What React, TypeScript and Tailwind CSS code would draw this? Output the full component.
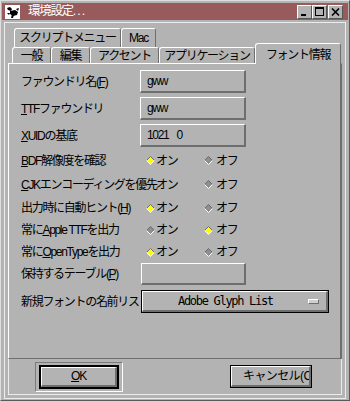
import type { ReactNode } from 'react';

function Diamond({ on }: { on: boolean }) {
  return (
    <svg width="9" height="9" viewBox="0 0 9 9" className="shrink-0">
      <polygon points="4.5,0.5 8.5,4.5 4.5,8.5 0.5,4.5" fill={on ? '#ffff00' : '#8e8e8e'} />
      <polyline points="0.5,4.5 4.5,0.5 8.5,4.5" fill="none" stroke="#6a6a6a" />
      <polyline points="0.5,4.5 4.5,8.5 8.5,4.5" fill="none" stroke="#ffffff" />
    </svg>
  );
}

function OnOff({ on, off }: { on: boolean; off: boolean }) {
  return (
    <div className="flex items-center pl-[6px]">
      <div className="flex w-[58px] items-center gap-[1px]">
        <Diamond on={on} />
        <span>オン</span>
      </div>
      <div className="flex items-center gap-[3px]">
        <Diamond on={off} />
        <span>オフ</span>
      </div>
    </div>
  );
}

function Field({ children }: { children?: ReactNode }) {
  return (
    <div className="flex h-full w-[106px] items-center border-t border-l border-r-2 border-b-2 border-t-white border-l-white border-r-[#6e6e6e] border-b-[#6e6e6e] pl-[6px]">
      {children}
    </div>
  );
}

function Row({ label, h, children, className = '' }: { label: ReactNode; h: string; children?: ReactNode; className?: string }) {
  return (
    <div className={`flex items-center ${h} ${className}`}>
      <div className="relative z-10 w-[119px] shrink-0 whitespace-nowrap">
        <span className="bg-[#b3b3b3]">{label}</span>
      </div>
      {children}
    </div>
  );
}

function Tab({ children, className = '' }: { children: ReactNode; className?: string }) {
  return (
    <div
      className={`flex items-center justify-center rounded-t-[3px] border-t border-l border-r border-t-white border-l-white border-r-[#6e6e6e] bg-[#b3b3b3] ${className}`}
    >
      {children}
    </div>
  );
}

function TitleIcon() {
  return (
    <svg width="15" height="14" viewBox="0 0 15 14" className="shrink-0">
      <rect width="15" height="14" fill="#ffffff" />
      <path d="M2 3 L5 2 L7 4 L6 6 L3 5 Z" fill="#000" />
      <path d="M5 6 L10 5 L13 7 L12 10 L8 11 L5 9 Z" fill="#000" />
      <path d="M7 9 L6 13 L8 13 L9 10 Z" fill="#000" />
      <path d="M11 4 L14 3 L13 6 Z" fill="#000" />
      <path d="M2 8 L5 8 L4 10 Z" fill="#000" />
    </svg>
  );
}

function WinButton({ children, className = '' }: { children: ReactNode; className?: string }) {
  return (
    <div
      className={`relative flex h-[14px] w-[15px] items-center justify-center border-t border-l border-r border-b border-t-white border-l-white border-r-[#555555] border-b-[#555555] bg-[#b3b3b3] ${className}`}
    >
      {children}
    </div>
  );
}

export default function App() {
  return (
    <div className="flex h-[401px] w-[350px] flex-col border border-t-[#dedede] border-l-[#dedede] border-r-[#5a5a5a] border-b-[#5a5a5a] bg-[#b3b3b3] px-[1px] pt-[2px] font-['Liberation_Sans','Noto_Sans_CJK_JP',sans-serif] text-[12px] tracking-[-1.3px] text-black">
      {/* title bar */}
      <div className="flex h-[17px] shrink-0 items-center bg-[#985a5a] pl-[3px] pr-[5px]">
        <TitleIcon />
        <span className="ml-[8px] text-[12.5px] text-white">
          環境設定<span className="tracking-[1px]">...</span>
        </span>
        <div className="ml-auto flex items-center">
          <WinButton>
            <div className="absolute bottom-[2px] left-[3px] h-[2px] w-[5px] bg-black" />
          </WinButton>
          <WinButton>
            <div className="h-[9px] w-[9px] border border-t-2 border-black" />
          </WinButton>
          <WinButton className="ml-[1px]">
            <svg width="9" height="8" viewBox="0 0 9 8">
              <path d="M1 0.5 L8 7.5 M8 0.5 L1 7.5" stroke="#000" strokeWidth="1.6" />
            </svg>
          </WinButton>
        </div>
      </div>

      {/* body frame */}
      <div className="mx-[2px] mt-[2px] mb-[1px] flex flex-1 flex-col border border-[#ececec] p-[3px]">
        {/* tabs */}
        <div className="ml-[6px] mt-[2px] flex h-[19px] items-start pb-[4px]">
          <Tab className="h-[19px] w-[107px] shrink-0">スクリプトメニュー</Tab>
          <Tab className="h-[19px] w-[35px] shrink-0">Mac</Tab>
        </div>
        <div className="relative ml-[4px] -mt-[4px] flex h-[20px] items-end">
          <Tab className="h-[16px] w-[39px] shrink-0">一般</Tab>
          <Tab className="h-[16px] w-[39px] shrink-0">編集</Tab>
          <Tab className="h-[16px] w-[69px] shrink-0">アクセント</Tab>
          <Tab className="h-[16px] w-[96px] shrink-0">アプリケーション</Tab>
          <Tab className="relative z-10 -mb-[1px] h-[21px] w-[86px] shrink-0 pt-[1px]">フォント情報</Tab>
        </div>

        {/* panel */}
        <div className="flex h-[296px] shrink-0 flex-col border-t border-l border-r-2 border-b border-t-white border-l-white border-r-[#6e6e6e] border-b-[#6e6e6e] pl-[12px] pt-[6px]">
          <Row label={<>ファウンドリ名(<span className="underline">F</span>)</>} h="h-[23px]" className="mb-[4px]">
            <Field>gww</Field>
          </Row>
          <Row label={<><span className="underline">T</span>TFファウンドリ</>} h="h-[23px]" className="mb-[4px]">
            <Field>gww</Field>
          </Row>
          <Row label={<><span className="underline">X</span>UIDの基底</>} h="h-[23px]">
            <Field>
              1021<span className="ml-[8px]">0</span>
            </Field>
          </Row>
          <Row label={<><span className="underline">B</span>DF解像度を確認</>} h="h-[23px]" className="mt-[2px]">
            <OnOff on off={false} />
          </Row>
          <Row label={<><span className="underline">C</span>JKエンコーディングを優先</>} h="h-[25px]">
            <OnOff on off={false} />
          </Row>
          <Row label={<>出力時に自動ヒント(<span className="underline">H</span>)</>} h="h-[22px]">
            <OnOff on off={false} />
          </Row>
          <Row label={<>常に<span className="underline">A</span>pple TTFを出力</>} h="h-[22px]">
            <OnOff on={false} off />
          </Row>
          <Row label={<>常に<span className="underline">O</span>penTypeを出力</>} h="h-[22px]">
            <OnOff on off={false} />
          </Row>
          <Row label={<>保持するテーブル(<span className="underline">P</span>)</>} h="h-[22px]">
            <div className="ml-[1px] h-full">
              <div className="flex h-full w-[105px] border-t border-l border-r-2 border-b-2 border-t-white border-l-white border-r-[#6e6e6e] border-b-[#6e6e6e]" />
            </div>
          </Row>
          <div className="mt-[5px] flex h-[23px] items-center">
            <div className="w-[120px] shrink-0 whitespace-nowrap">新規フォントの名前リスト</div>
            <div className="relative z-20 h-full w-[188px] border border-black bg-[#b3b3b3]">
              <div className="flex h-full items-center border-t border-l border-r-2 border-b-2 border-t-white border-l-white border-r-[#6e6e6e] border-b-[#6e6e6e] pl-[35px] pr-[7px] font-['DejaVu_Sans_Mono',monospace] text-[12px] tracking-[-1.3px]">
                <span>Adobe Glyph List</span>
                <div className="ml-auto h-[5px] w-[11px] border-t border-l border-r border-b border-t-white border-l-white border-r-[#6e6e6e] border-b-[#6e6e6e] bg-[#cfcfcf]" />
              </div>
            </div>
          </div>
        </div>

        {/* buttons */}
        <div className="flex flex-1 items-center justify-between border-l border-r border-b border-[#ececec] pl-[26px] pr-[29px]">
          <div className="flex h-[30px] w-[88px] items-center justify-center border border-t-[#7a7a7a] border-l-[#7a7a7a] border-r-white border-b-white">
            <div className="h-[24px] w-[80px] border-2 border-black">
              <div className="flex h-full items-center justify-center border-t border-l border-r-2 border-b-2 border-t-white border-l-white border-r-[#6e6e6e] border-b-[#6e6e6e]">
                <span>
                  <span className="underline">O</span>K
                </span>
              </div>
            </div>
          </div>
          <div className="h-[23px] w-[82px] border border-black">
            <div className="flex h-full items-center overflow-hidden whitespace-nowrap border-t border-l border-r-2 border-b-2 border-t-white border-l-white border-r-[#6e6e6e] border-b-[#6e6e6e] pl-[11px] tracking-[-0.6px]">
              キャンセル(C)
            </div>
          </div>
        </div>
      </div>
    </div>
  );
}
